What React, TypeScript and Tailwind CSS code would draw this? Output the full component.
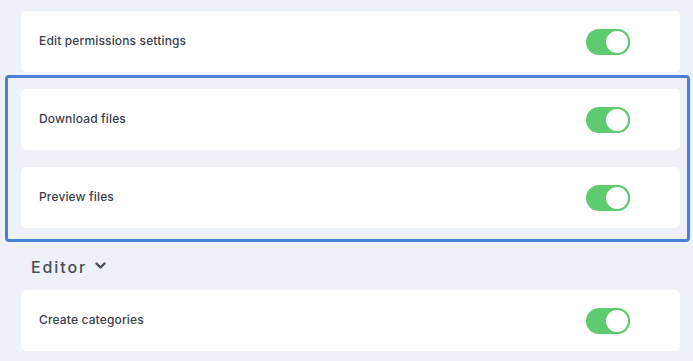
import React from 'react';

interface PermissionRowProps {
    label: string;
    enabled: boolean;
}

const Toggle: React.FC<{ on: boolean }> = ({ on }) => (
    <div
        className={`relative w-[44px] h-[26px] rounded-full shrink-0 ${on ? 'bg-[#5ecb70]' : 'bg-[#d5d9e1]'}`}
    >
        <span className="absolute right-0 top-0 w-[26px] h-[26px] rounded-full bg-white border-2 border-[#5ecb70]" />
    </div>
);

const PermissionRow: React.FC<PermissionRowProps> = ({ label, enabled }) => (
    <div className="h-[61px] w-[659px] bg-white rounded-[5px] flex items-center justify-between pl-[18px] pr-[50px]">
        <span className="text-[12px] leading-none font-medium text-[#3a404c] tracking-[0.15px] mt-[-1px]">{label}</span>
        <Toggle on={enabled} />
    </div>
);

const App: React.FC = () => {
    return (
        <div
            className="w-[693px] h-[361px] overflow-hidden bg-[#eef1f7] flex flex-col pt-[11px]"
            style={{ fontFamily: 'Inter, Lato, sans-serif' }}
        >
            <div className="pl-[21px]">
                <PermissionRow label="Edit permissions settings" enabled />
            </div>

            {/* Highlighted group */}
            <div className="mt-[3px] ml-[5px] w-[685px] h-[167px] border-[3px] border-[#4a80d8] rounded-[4px] pl-[13px] pt-[11px] flex flex-col gap-[17px]">
                <PermissionRow label="Download files" enabled />
                <PermissionRow label="Preview files" enabled />
            </div>

            {/* Section header */}
            <div className="h-[48px] pl-[31px] pt-[1px] flex items-center gap-[8px]">
                <span className="text-[16px] font-medium tracking-[1.9px] text-[#474d59]">Editor</span>
                <svg width="11" height="8" viewBox="0 0 11 8" className="mt-[-1px]">
                    <path d="M1.5 1.5 L5.5 5.5 L9.5 1.5" fill="none" stroke="#474d59" strokeWidth="2.4" strokeLinecap="round" strokeLinejoin="round" />
                </svg>
            </div>

            <div className="pl-[21px]">
                <PermissionRow label="Create categories" enabled />
            </div>
        </div>
    );
};

export default App;
